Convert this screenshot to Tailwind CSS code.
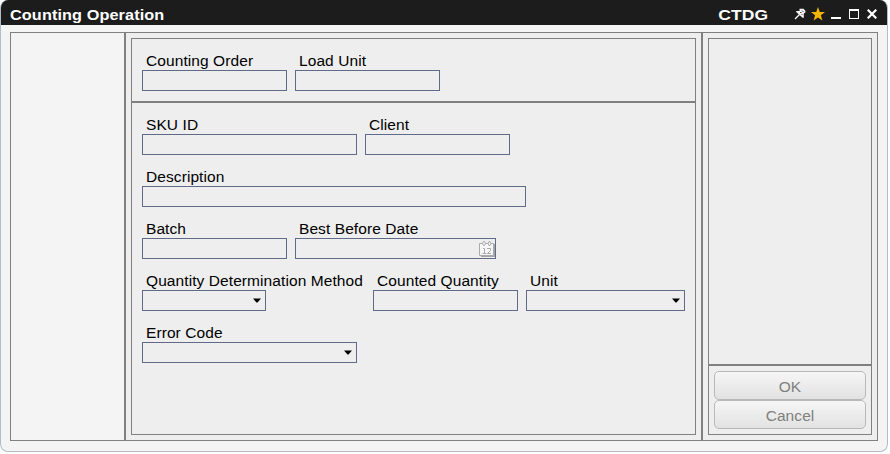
<!DOCTYPE html>
<html lang="en">
<head>
<meta charset="utf-8">
<title>Counting Operation</title>
<script src="https://cdn.jsdelivr.net/npm/@tailwindcss/browser@4"></script>
</head>
<body class="bg-white font-['Liberation_Sans',Arial,sans-serif] text-[15.49px] tracking-[0.09px] leading-[18px] text-black overflow-hidden">
<div class="w-[888px] h-[452px] flex flex-col rounded-lg overflow-hidden bg-[#f4f4f4] border-x border-b border-[#b0bcc8]">
  <header class="-mx-px h-[25px] shrink-0 bg-[#1c1c1c] text-white flex items-center pl-[10px] pr-[11px] pt-[4px] font-bold">
    <h1 class="grow"><span class="inline-block origin-left scale-x-[1.05]">Counting Operation</span></h1>
    <span class="mr-[26px] origin-right scale-x-[1.13]">CTDG</span>
    <div class="flex items-center -mt-[2px]">
      <svg class="w-[12px] h-[12px] mr-[5px]" viewBox="0 0 12 12"><path d="M5.500 .8H9.500L11.500 3V4.200L9.800 5.500V9.800H8.500L2.200 4V3H5.500Z" fill="#f4f4f4"/><path d="M5.500 6.500 1 11" stroke="#fff" stroke-width="1.3"/><path d="M6 4.500H7.500M8 2.500 9.500 4M7.500 6.500H8.500" stroke="#444"/></svg>
      <svg class="w-[14px] h-[14px] mr-[6px]" viewBox="0 0 14 14"><path d="M7 0 8.800 4.900H14L9.900 8.200 11.400 13.500 7 10.400 2.600 13.500 4.100 8.200 0 4.900H5.200Z" fill="#f5b400"/></svg>
      <svg class="w-[10px] h-[10px] mr-[8px]" viewBox="0 0 10 10"><path d="M0 8H10V10H0Z" fill="#fff"/></svg>
      <svg class="w-[10px] h-[10px] mr-[8px]" viewBox="0 0 10 10"><path d="M0 0H10V10H0ZM1 2V9H9V2Z" fill="#fff" fill-rule="evenodd"/></svg>
      <svg class="w-[10px] h-[10px]" viewBox="0 0 10 10"><path d="M.7.7 9.3 9.3M9.3.7.7 9.3" stroke="#fff" stroke-width="2.2"/></svg>
    </div>
  </header>
  <main class="grow flex pl-[9px] pt-[7px] pb-[10px]">
    <aside class="w-[115px] border border-[#808080]"></aside>
    <section class="w-[577px] border border-[#808080] bg-[#eeeeee] p-[5px] flex flex-col">
      <div class="h-[64px] border border-[#808080] pl-[10px] pt-[13px] flex gap-[8px]">
        <label class="w-[145px]"><span class="block pl-[4px]">Counting Order</span><span class="block h-[21px] border border-[#5f6b88]"></span></label>
        <label class="w-[145px]"><span class="block pl-[4px]">Load Unit</span><span class="block h-[21px] border border-[#5f6b88]"></span></label>
      </div>
      <div class="grow border border-[#808080] pl-[10px] pt-[13px] flex flex-col gap-[13px]">
        <div class="flex gap-[8px]">
          <label class="w-[215px]"><span class="block pl-[4px]">SKU ID</span><span class="block h-[21px] border border-[#5f6b88]"></span></label>
          <label class="w-[145px]"><span class="block pl-[4px]">Client</span><span class="block h-[21px] border border-[#5f6b88]"></span></label>
        </div>
        <label class="w-[384px]"><span class="block pl-[4px]">Description</span><span class="block h-[21px] border border-[#5f6b88]"></span></label>
        <div class="flex gap-[8px]">
          <label class="w-[145px]"><span class="block pl-[4px]">Batch</span><span class="block h-[21px] border border-[#5f6b88]"></span></label>
          <label class="w-[201px]"><span class="block pl-[4px]">Best Before Date</span>
            <span class="flex justify-end h-[21px] border border-[#5f6b88] pt-[2px]">
              <svg class="w-[16px] h-[16px]" viewBox="0 0 16 16"><path d="M2 3H16V16H2Z" fill="#a5a5a5"/><path d="M.5 2.5H14.5V14.5H.5Z" fill="#f6f6f6" stroke="#aaa"/><path d="M3.5 2.5 4.5.5H5.5L6.5 2.5 5.5 4.5H4.5ZM9 2.5 10 .5H11L12 2.5 11 4.5H10Z" fill="#eee" stroke="#aaa"/><path d="M6 2.5H9" stroke="#aaa"/><path d="M4 7.5H5.5V13M3.5 12.5H7.500M8 7.500H11.500V9.500L8.500 12.500H12" fill="none" stroke="#aaa"/></svg>
            </span></label>
        </div>
        <div class="flex gap-[8px]">
          <label class="w-[223px]"><span class="block pl-[4px] whitespace-nowrap">Quantity Determination Method</span>
            <span class="flex items-center justify-end w-[124px] h-[21px] border border-[#5f6b88] pr-[4px]"><svg class="w-[8px] h-[5px]" viewBox="0 0 8 5"><path d="M0 .5H8L4.500 4.500H3.500Z"/></svg></span></label>
          <label class="w-[145px]"><span class="block pl-[4px]">Counted Quantity</span><span class="block h-[21px] border border-[#5f6b88]"></span></label>
          <label class="w-[159px]"><span class="block pl-[4px]">Unit</span>
            <span class="flex items-center justify-end h-[21px] border border-[#5f6b88] pr-[4px]"><svg class="w-[8px] h-[5px]" viewBox="0 0 8 5"><path d="M0 .5H8L4.500 4.500H3.500Z"/></svg></span></label>
        </div>
        <label class="w-[215px]"><span class="block pl-[4px]">Error Code</span>
          <span class="flex items-center justify-end h-[21px] border border-[#5f6b88] pr-[4px]"><svg class="w-[8px] h-[5px]" viewBox="0 0 8 5"><path d="M0 .5H8L4.500 4.500H3.500Z"/></svg></span></label>
      </div>
    </section>
    <aside class="w-[176px] border border-[#808080] bg-[#eeeeee] p-[5px] flex flex-col">
      <div class="grow border border-[#808080]"></div>
      <div class="h-[70px] border border-[#808080] p-[5px] text-[#808080]">
        <button class="block w-full h-[29px] pt-[2px] rounded-[5px] border border-[#b8b8b8] bg-linear-to-b from-[#f6f6f6] to-[#e2e2e2]">OK</button>
        <button class="block w-full h-[29px] pt-[2px] rounded-[5px] border border-[#b8b8b8] bg-linear-to-b from-[#f6f6f6] to-[#e2e2e2]">Cancel</button>
      </div>
    </aside>
  </main>
</div>
</body>
</html>
